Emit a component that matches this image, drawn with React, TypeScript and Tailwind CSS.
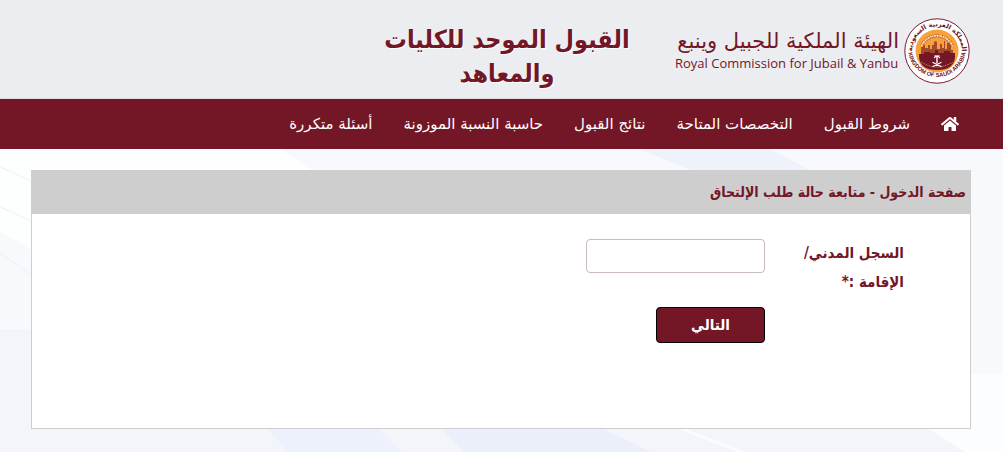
import { FaHome } from "react-icons/fa";

const links = [
  "شروط القبول",
  "التخصصات المتاحة",
  "نتائج القبول",
  "حاسبة النسبة الموزونة",
  "أسئلة متكررة",
];

function Emblem() {
  return (
    <svg viewBox="0 0 66 66" className="size-[66px] shrink-0" aria-hidden="true">
      <defs>
        <path id="arcTop" d="M8.9 40 A25 25 0 1 1 57.1 40" />
        <path id="arcBottom" d="M4 30 A29 29 0 1 0 62 30" />
        <clipPath id="disc">
          <circle cx="33" cy="33" r="21.5" />
        </clipPath>
      </defs>
      <circle cx="33" cy="33" r="32.2" fill="#fff" stroke="#7b1c2c" strokeWidth="1" />
      <circle cx="33" cy="33" r="21.5" fill="#f6a13a" />
      <g clipPath="url(#disc)">
        <path d="M17 37v-8h2v-2h2v3h3v-3h2v4h2V27h2v-3l1.500-1 1.500 1v7h3v-5h2v4h2v-7h1v8h2v-6h4v7h2v6z" fill="#a34a2c" />
        <path d="M15 36h5v-2h6v1h5v-3h3v3h6v-2h6v2h5v4q-1 13-18 13T15 39z" fill="#731626" />
        <path d="M17 44q16 10 32 0" fill="none" stroke="#e2b6a6" strokeWidth=".8" strokeDasharray="1 .8" />
      </g>
      <path d="M17.500 28a16.800 16.800 0 0 1 31 0" fill="none" stroke="#c8692f" strokeWidth="3" />
      <path d="M17.500 28a16.800 16.800 0 0 1 31 0" fill="none" stroke="#fff3df" strokeWidth="1.600" strokeDasharray="1.500 .6 1 .5 2 .8" />
      <g stroke="#fff" fill="none" strokeLinecap="round">
        <path d="M29 48.500 37 44.500M37 48.500 29 44.500" strokeWidth="1.300" />
        <path d="M33 45v-7" strokeWidth="1.400" />
        <path d="M30.500 39.500q2.500-3 5 0M31 37.800l2 .8 2-.8" strokeWidth="1.200" />
      </g>
      <g fill="#6b1324" className="font-['DejaVu_Sans'] font-bold">
        <text fontSize="6.5" textAnchor="middle" direction="rtl">
          <textPath href="#arcTop" startOffset="50%">المملكة العربية السعودية</textPath>
        </text>
        <text fontSize="5.8" textAnchor="middle" direction="ltr" className="font-['Liberation_Sans']">
          <textPath href="#arcBottom" startOffset="50%">KINGDOM OF SAUDI ARABIA</textPath>
        </text>
      </g>
    </svg>
  );
}

function Backdrop() {
  return (
    <svg
      viewBox="0 0 1003 303"
      preserveAspectRatio="none"
      className="absolute inset-0 -z-10 size-full"
      aria-hidden="true"
    >
      <rect width="1003" height="303" fill="#f8f9fd" />
      <path d="M0 0h280l60 40H120L31 100 0 82z" fill="#fdfefe" />
      <path d="M0 18 31 32M0 58l31 14M0 104l31 22" stroke="#eef0f5" />
      <path d="M0 180h31v100h240l18 23H0z" fill="#f4f5fa" />
      <path d="M268 280h120l22 23H288z" fill="#edf1fb" />
      <path d="M380 280h65l22 23h-65z" fill="#f4f5fa" />
      <path d="M442 280h162l48 23H464z" fill="#ebeffa" />
      <path d="M604 280h325l36 23H652z" fill="#f4f5fa" />
      <path d="m682 280 60 23" stroke="#fafbfd" strokeWidth="3" />
      <path d="M640 0h130l40 21H690z" fill="#eff2fb" />
      <path d="M971 225h32v78h-38l-36-23h42z" fill="#fcfdfe" />
    </svg>
  );
}

export default function App() {
  return (
    <div dir="rtl" className="flex min-h-screen flex-col bg-white font-['DejaVu_Sans',sans-serif] text-[#731626]">
      <header className="flex h-[99px] items-start border-b border-[#e4dfe3] bg-[#ecedf1] pr-[33px]">
        <div className="flex items-center gap-[5px] pt-[18px]">
          <Emblem />
          <div className="flex w-[224px] flex-col whitespace-nowrap">
            <span className="text-[21px] leading-6">الهيئة الملكية للجبيل وينبع</span>
            <span dir="ltr" className="font-['Open_Sans',sans-serif] text-[13px] leading-5">
              Royal Commission for Jubail &amp; Yanbu
            </span>
          </div>
        </div>
        <h1 className="mr-[30px] w-[276px] pt-[23px] text-center font-['DejaVu_Sans_Condensed','DejaVu_Sans',sans-serif] text-[25px] leading-[34px] font-bold [text-shadow:1px_1px_1px_white]">
          القبول الموحد للكليات والمعاهد
        </h1>
      </header>

      <nav className="bg-[#731626] pr-11 text-white">
        <ul className="flex h-[50px] items-center gap-[31px] text-[15px] whitespace-nowrap">
          <li>
            <a href="#home" aria-label="الرئيسية">
              <FaHome size={18} />
            </a>
          </li>
          {links.map((link) => (
            <li key={link}>
              <a href="#section">{link}</a>
            </li>
          ))}
        </ul>
      </nav>

      <main className="relative isolate flex-1 pt-[21px] pr-8 pb-[23px] pl-[31px]">
        <Backdrop />
        <section className="border border-[#cecece] bg-white font-['DejaVu_Sans_Condensed','DejaVu_Sans',sans-serif]">
          <h2 className="flex h-[43px] items-center bg-[#cecece] px-1 text-[14px] font-bold">
            صفحة الدخول - متابعة حالة طلب الإلتحاق
          </h2>
          <form className="flex min-h-[214px] items-start gap-[21px] pt-[25px] pr-[66px]">
            <label htmlFor="identity" className="w-[118px] text-[15px] leading-[29px] font-bold">
              السجل المدني/ الإقامة :*
            </label>
            <div className="flex flex-col items-start gap-[34px]">
              <input
                id="identity"
                type="text"
                className="h-[34px] w-[179px] rounded-[4px] border border-[#c9bcc0] bg-white px-3 text-[15px]"
              />
              <button
                type="button"
                className="h-9 w-[109px] rounded-[4px] border border-black bg-[#731626] text-[15px] font-bold text-white"
              >
                التالي
              </button>
            </div>
          </form>
        </section>
      </main>
    </div>
  );
}
